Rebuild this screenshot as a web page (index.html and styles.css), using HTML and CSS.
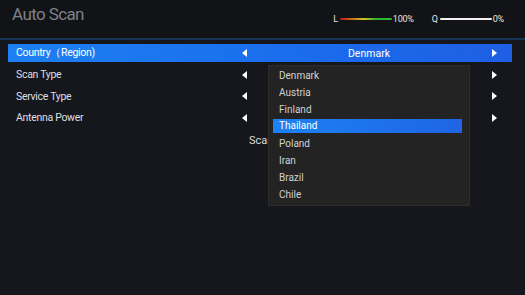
FILE: index.html
```html
<!DOCTYPE html>
<html>

<head>
  <meta charset="UTF-8">
  <title>Auto Scan</title>
  <link rel="stylesheet" href="styles.css">
</head>

<body>
  <div class="header">
    <h1>Auto Scan</h1>
    <div class="meters">
      <span class="meter-label">L</span>
      <span class="bar bar-level"></span>
      <span class="meter-value">100%</span>
      <span class="meter-label meter-q">Q</span>
      <span class="bar bar-quality"></span>
      <span class="meter-value">0%</span>
    </div>
  </div>
  <div class="separator"></div>

  <ul class="menu">
    <li class="row active">
      <span class="label">Country（Region)</span>
      <span class="arrow-left"></span>
      <span class="value">Denmark</span>
      <span class="arrow-right"></span>
    </li>
    <li class="row">
      <span class="label">Scan Type</span>
      <span class="arrow-left"></span>
      <span class="value"></span>
      <span class="arrow-right"></span>
    </li>
    <li class="row">
      <span class="label">Service Type</span>
      <span class="arrow-left"></span>
      <span class="value"></span>
      <span class="arrow-right"></span>
    </li>
    <li class="row">
      <span class="label">Antenna Power</span>
      <span class="arrow-left"></span>
      <span class="value"></span>
      <span class="arrow-right"></span>
    </li>
  </ul>

  <div class="scan-button">Scan</div>

  <!-- lista de paises aberta -->
  <ul class="dropdown">
    <li>Denmark</li>
    <li>Austria</li>
    <li>Finland</li>
    <li class="selected">Thailand</li>
    <li>Poland</li>
    <li>Iran</li>
    <li>Brazil</li>
    <li>Chile</li>
  </ul>
</body>

</html>
```

FILE: styles.css
```css
body {
  margin: 0;
  width: 525px;
  height: 295px;
  overflow: hidden;
  position: relative;
  font-family: Roboto, "Liberation Sans", sans-serif;
  color: #e4e4e6;
  background-color: #15171d;
}

.header {
  display: flex;
  align-items: center;
  justify-content: space-between;
  height: 38px;
  padding: 0 21px 0 12px;
  background-color: #111317;
}

h1 {
  margin: 0 0 11px;
  font-size: 17px;
  font-weight: normal;
  letter-spacing: -0.6px;
  color: #7e8189;
}

.meters {
  display: flex;
  align-items: center;
  font-size: 9px;
  letter-spacing: -0.2px;
  color: #e6e6e6;
  margin-bottom: 1px;
}

.meter-label {
  margin-right: 2px;
}

.meter-q {
  margin-left: 18px;
}

.bar {
  width: 52px;
  height: 2px;
  border-radius: 1px;
  margin-right: 1px;
}

.bar-level {
  background: linear-gradient(to right, #c0141c, #d4c21e 45%, #27b52f 70%, #30c030);
}

.bar-quality {
  background-color: #f2f2f2;
}

.separator {
  height: 2px;
  background-color: #173556;
}

.menu {
  list-style: none;
  margin: 4px 13px 0 8px;
  padding: 0;
  display: flex;
  flex-direction: column;
  gap: 3.5px;
}

.row {
  display: grid;
  grid-template-columns: 224px 8px 1fr 8px;
  align-items: center;
  height: 18px;
  padding: 0 14px 0 8px;
  font-size: 10.5px;
  color: #dedfe2;
}

.label {
  letter-spacing: -0.3px;
}

.row.active {
  background: linear-gradient(to right, #1d80f2, #1a6cec 60%, #1f5fe3);
  color: #fff;
}

.value {
  text-align: center;
}

.arrow-left,
.arrow-right {
  width: 0;
  height: 0;
  justify-self: center;
  border-top: 4px solid transparent;
  border-bottom: 4px solid transparent;
}

.arrow-left {
  border-right: 5px solid #fff;
}

.arrow-right {
  border-left: 5px solid #fff;
}

.scan-button {
  position: absolute;
  left: 249px;
  top: 134px;
  font-size: 11px;
  color: #dcdcdc;
}

.dropdown {
  position: absolute;
  left: 268px;
  top: 65px;
  width: 189px;
  list-style: none;
  margin: 0;
  padding: 1px 7px 2px 4px;
  background-color: #232323;
  border: 1px solid #2c2c2c;
  font-size: 10px;
  color: #d2d2d2;
}

.dropdown li {
  height: 17px;
  line-height: 17px;
  padding-left: 6px;
}

.dropdown li.selected {
  height: 14px;
  line-height: 14px;
  margin: 1px 0 2px;
  background: linear-gradient(to right, #1d82f2, #1f64e4);
  color: #fff;
}
```
